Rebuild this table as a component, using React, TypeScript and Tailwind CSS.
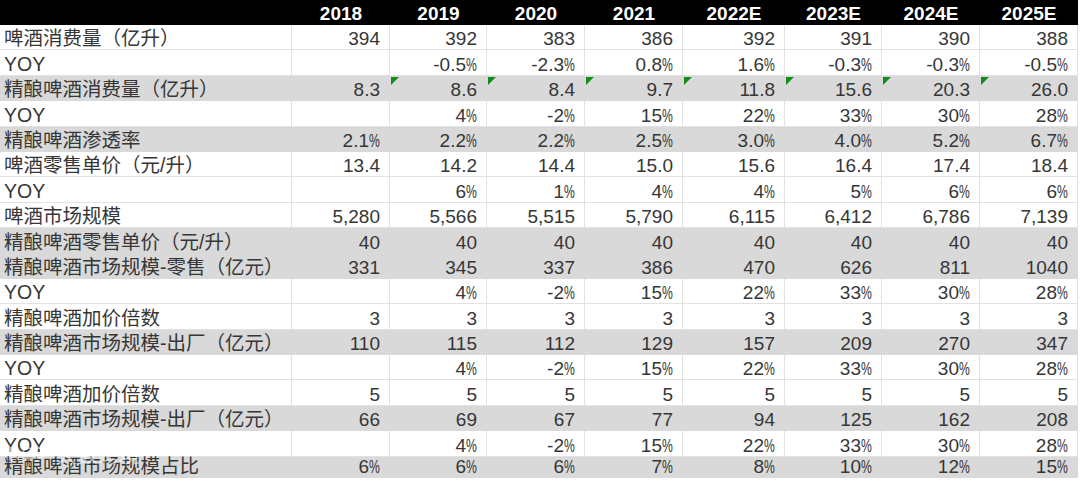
import React from "react";

const YEARS = ["2018", "2019", "2020", "2021", "2022E", "2023E", "2024E", "2025E"];

type Row = { label: string; values: string[]; gray?: boolean; flags?: boolean };

const YOY_A = ["", "4%", "-2%", "15%", "22%", "33%", "30%", "28%"];

const ROWS: Row[] = [
  { label: "啤酒消费量（亿升）", values: ["394", "392", "383", "386", "392", "391", "390", "388"] },
  { label: "YOY", values: ["", "-0.5%", "-2.3%", "0.8%", "1.6%", "-0.3%", "-0.3%", "-0.5%"] },
  { label: "精酿啤酒消费量（亿升）", values: ["8.3", "8.6", "8.4", "9.7", "11.8", "15.6", "20.3", "26.0"], gray: true, flags: true },
  { label: "YOY", values: YOY_A },
  { label: "精酿啤酒渗透率", values: ["2.1%", "2.2%", "2.2%", "2.5%", "3.0%", "4.0%", "5.2%", "6.7%"], gray: true },
  { label: "啤酒零售单价（元/升）", values: ["13.4", "14.2", "14.4", "15.0", "15.6", "16.4", "17.4", "18.4"] },
  { label: "YOY", values: ["", "6%", "1%", "4%", "4%", "5%", "6%", "6%"] },
  { label: "啤酒市场规模", values: ["5,280", "5,566", "5,515", "5,790", "6,115", "6,412", "6,786", "7,139"] },
  { label: "精酿啤酒零售单价（元/升）", values: Array(8).fill("40"), gray: true },
  { label: "精酿啤酒市场规模-零售（亿元）", values: ["331", "345", "337", "386", "470", "626", "811", "1040"], gray: true },
  { label: "YOY", values: YOY_A },
  { label: "精酿啤酒加价倍数", values: Array(8).fill("3") },
  { label: "精酿啤酒市场规模-出厂（亿元）", values: ["110", "115", "112", "129", "157", "209", "270", "347"], gray: true },
  { label: "YOY", values: YOY_A },
  { label: "精酿啤酒加价倍数", values: Array(8).fill("5") },
  { label: "精酿啤酒市场规模-出厂（亿元）", values: ["66", "69", "67", "77", "94", "125", "162", "208"], gray: true },
  { label: "YOY", values: YOY_A },
  { label: "精酿啤酒市场规模占比", values: ["6%", "6%", "6%", "7%", "8%", "10%", "12%", "15%"], gray: true },
];

function Val({ v }: { v: string }) {
  if (!v.endsWith("%")) return <>{v}</>;
  return (
    <>
      {v.slice(0, -1)}
      <span className="inline-block w-[11px] origin-left scale-x-[0.64]">%</span>
    </>
  );
}

export default function App() {
  return (
    <div className="relative w-[1080px] h-[483px] overflow-hidden bg-white font-['Liberation_Sans','Noto_Sans_CJK_SC',sans-serif] text-[19px] text-[#363636]">
      <div className="grid grid-cols-[292px_98px_97px_98px_98px_102px_97px_98px_98px]">
        {/* header */}
        <div className="h-[25px] bg-black" />
        {YEARS.map(y => (
          <div key={y} className="h-[25px] bg-black flex items-end justify-center pb-[2px] leading-[19px] font-bold text-white">
            {y}
          </div>
        ))}

        {ROWS.map((r, i) => {
          const last = i === ROWS.length - 1;
          const h = last ? "h-[21px]" : "h-[25.4px]";
          const cell = r.gray
            ? `bg-[#d9d9d9] border-r border-b border-[#d9d9d9]`
            : `bg-white border-r border-b border-[#e2e2e2]`;
          return (
            <React.Fragment key={i}>
              <div className={`${h} ${cell} flex items-end pl-[4px] pb-[1px] leading-[19px] text-[19.5px] whitespace-nowrap`}>
                {r.label}
              </div>
              {r.values.map((v, j) => (
                <div key={j} className={`${h} ${cell} relative flex items-end justify-end pr-[9px] pb-[1px] leading-[19px] whitespace-nowrap`}>
                  {r.flags && j > 0 && (
                    <span className="absolute left-[1px] top-[1px] w-0 h-0 border-t-[8px] border-r-[8px] border-t-[#168a1c] border-r-transparent" />
                  )}
                  <Val v={v} />
                </div>
              ))}
            </React.Fragment>
          );
        })}
      </div>

      {/* watermark */}
      <div className="absolute left-[8px] top-[443px] flex items-center gap-[4px] text-white/60 pointer-events-none">
        <svg width="44" height="20" viewBox="0 0 44 20" fill="none" stroke="currentColor" strokeWidth="2">
          <path d="M3 3 L3 17 M3 11 L10 4 M6 9 L11 16" />
          <circle cx="20" cy="9" r="5" />
          <circle cx="31" cy="9" r="5" />
        </svg>
        <span className="text-[21px] leading-none font-['Noto_Sans_CJK_SC',sans-serif]">大数跨境</span>
      </div>
    </div>
  );
}
